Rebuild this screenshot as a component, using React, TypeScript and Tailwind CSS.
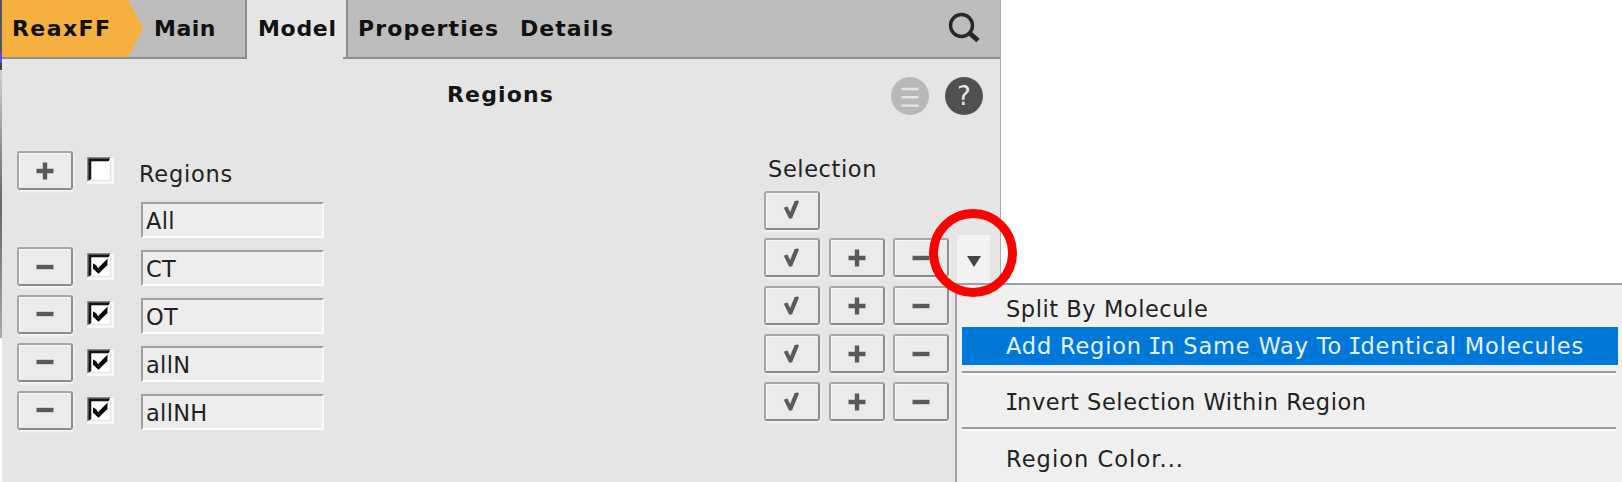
import React from "react";

type Glyph = "plus" | "minus" | "check";

function GlyphIcon({ kind }: { kind: Glyph }) {
  return (
    <svg width="20" height="20" viewBox="0 0 20 20" fill="none" stroke="#5a5a5a">
      {kind === "plus" && <path d="M1.5 10H18.5M10 1.5V18.5" strokeWidth="4.4" />}
      {kind === "minus" && <path d="M1.5 10H18.5" strokeWidth="4.4" />}
      {kind === "check" && (
        <path d="M1.8 7.8L5.4 6.4L8.2 12L12.6 1L16.6 0.6V2.6L10 18.4H7Z" fill="#5a5a5a" stroke="none" />
      )}
    </svg>
  );
}

function ToolButton({ kind }: { kind: Glyph }) {
  return (
    <button className="flex h-[39px] w-[56px] shrink-0 items-center justify-center rounded-[3px] border-2 border-t-[#a6a6a6] border-r-[#8e8e8e] border-b-[#8a8a8a] border-l-[#a6a6a6] bg-[#ebebeb] shadow-[1px_2px_2px_#f4f4f4,inset_1px_1px_1px_#fafafa]">
      <GlyphIcon kind={kind} />
    </button>
  );
}

function CheckBox({ checked }: { checked: boolean }) {
  return (
    <svg width="27" height="27" viewBox="0 0 27 27" className="shrink-0">
      <rect width="27" height="27" fill="#f8f8f8" />
      <path d="M0 0H24L22 2H2V22L0 25Z" fill="#8c8c8c" />
      <path d="M1.5 1.5H23L21.5 4.5H4.5V22L1.5 24Z" fill="#151515" />
      <rect x="4.5" y="4.5" width="18.5" height="18.5" fill="#fff" />
      <path d="M23.5 3V23.5H3" stroke="#e6e6e6" strokeWidth="1.6" fill="none" />
      {checked && <path d="M6 10.5L9 12L11 15.2L20.5 5.5V12L11.5 20.8L6 15.8Z" fill="#080808" />}
    </svg>
  );
}

function Field({ value }: { value: string }) {
  return (
    <div className="flex h-[36px] w-[183px] border-2 border-t-[#a0a0a0] border-r-[#fafafa] border-b-[#fafafa] border-l-[#a0a0a0] bg-[#ededed] pt-[1px] pl-[3px] leading-[32px] tracking-[0.3px] whitespace-nowrap">
      {value}
    </div>
  );
}

// Capital I with serifs, narrowed to sit within proportional text.
function SerifI() {
  return <span className="-mx-[2px] font-['DejaVu_Sans_Mono',monospace]">I</span>;
}

const regions = ["CT", "OT", "allN", "allNH"];

export default function App() {
  return (
    <div className="relative h-[482px] w-[1622px] overflow-hidden bg-white font-['DejaVu_Sans',sans-serif] text-[22.5px] text-[#222]">
      <div className="flex h-full w-[1001px]">
        <div className="flex w-[2px] shrink-0 flex-col">
          <div className="h-[53px] bg-[#55555f]" />
          <div className="h-[10px] bg-[#5650e6]" />
          <div className="h-[7px] bg-[#444]" />
          <div className="h-[268px] bg-linear-to-b from-[#d0d0d0] via-[#666] to-[#aaa]" />
          <div className="grow bg-white" />
        </div>
        <div className="flex grow flex-col border-r border-[#aaa] bg-[#e5e5e5]">
          <nav className="flex h-[59px] shrink-0 text-[22px] leading-[57px] font-bold whitespace-nowrap text-[#111]">
            <div className="relative flex w-[245px] border-r-2 border-b-2 border-[#8e8e8e] bg-[#bdbdbd]">
              <svg width="141" height="57" className="absolute top-0 left-0">
                <path d="M0 0H126L141 28L126 57H0Z" fill="#f6b040" />
              </svg>
              <span className="relative w-[152px] pl-[10px] tracking-[1.4px]">ReaxFF</span>
              <span className="tracking-[0.5px]">Main</span>
            </div>
            <div className="flex w-[96px] pl-[11px] tracking-[0.7px]">Model</div>
            <div className="flex grow border-b-2 border-[#8e8e8e]">
              <div className="w-[5px] border-r-2 border-[#8e8e8e]" />
              <div className="flex grow justify-between bg-[#bdbdbd] pr-[17px]">
                <div className="flex">
                  <span className="w-[163px] pl-[10px] tracking-[1.15px]">Properties</span>
                  <span className="pl-[9px] tracking-[1.05px]">Details</span>
                </div>
                <svg width="36" height="36" viewBox="0 0 36 36" className="mt-[10px]" fill="none" stroke="#282828">
                  <circle cx="14.5" cy="15.5" r="11" strokeWidth="3.4" />
                  <path d="M22.5 23L31 30.5" strokeWidth="5" />
                </svg>
              </div>
            </div>
          </nav>
          <div className="flex h-[92px] shrink-0 items-start justify-between pr-[17px]">
            <h1 className="pt-[19px] pl-[445px] text-[22px] leading-[34px] font-bold tracking-[1.15px] text-[#151515]">Regions</h1>
            <div className="flex gap-[16px] pt-[18px]">
              <svg width="38" height="38" viewBox="0 0 38 38">
                <circle cx="19" cy="19" r="19" fill="#b8b8b8" />
                <path d="M10.5 12H27.5M10.5 20.3H27.5M10.5 28.6H27.5" stroke="#e5e5e5" strokeWidth="2.4" />
              </svg>
              <div className="flex size-[38px] items-center justify-center rounded-full bg-[#505050] text-[26px] text-[#e8e8e8]">
                ?
              </div>
            </div>
          </div>
          <div className="flex justify-between pr-[11px] pl-[15px]">
            <div className="flex flex-col">
              <div className="flex h-[51px]">
                <ToolButton kind="plus" />
                <div className="ml-[14px] pt-[6px]">
                  <CheckBox checked={false} />
                </div>
                <span className="ml-[25px] pt-[6px] leading-[34px] tracking-[0.75px]">Regions</span>
              </div>
              <div className="flex h-[45px] pl-[124px]">
                <Field value="All" />
              </div>
              {regions.map((name) => (
                <div key={name} className="flex h-[47.9px]">
                  <ToolButton kind="minus" />
                  <div className="ml-[14px] pt-[6px]">
                    <CheckBox checked />
                  </div>
                  <div className="ml-[27px] pt-[3px]">
                    <Field value={name} />
                  </div>
                </div>
              ))}
            </div>
            <div className="flex w-[225px] flex-col">
              <span className="h-[39.5px] pl-[4px] leading-[37px] tracking-[0.6px]">Selection</span>
              <div className="flex h-[47.9px]">
                <ToolButton kind="check" />
              </div>
              {regions.map((name, i) => (
                <div key={name} className="flex h-[47.9px] gap-[8.5px]">
                  <ToolButton kind="check" />
                  <ToolButton kind="plus" />
                  <ToolButton kind="minus" />
                  {i === 0 && (
                    <button className="-mt-[3px] ml-[-1px] flex h-[48px] w-[33px] shrink-0 items-center justify-center bg-[#f2f2f2]">
                      <svg width="14" height="11" viewBox="0 0 14 11" className="mt-[4px] ml-[2px]">
                        <path d="M0 0H14L7 11Z" fill="#444" />
                      </svg>
                    </button>
                  )}
                </div>
              ))}
            </div>
          </div>
        </div>
      </div>

      <div className="absolute top-[283px] left-[955px] h-[199px] w-[667px] border-t-2 border-l-2 border-[#a0a0a0] bg-[#efefef] pl-[5px] whitespace-nowrap">
        <div className="h-[42px] pl-[44px] leading-[48px] tracking-[0.55px]">Split By Molecule</div>
        <div className="h-[38px] w-[656px] bg-[#0078d9] pl-[44px] leading-[38px] tracking-[0.82px] text-[#e4f1fc]">
          Add Region <SerifI />n Same Way To <SerifI />dentical Molecules
        </div>
        <div className="mt-[6px] h-[4px] w-[654px] border-t-2 border-b-2 border-t-[#9c9c9c] border-b-[#fafafa]" />
        <div className="h-[52px] pl-[45px] leading-[54px] tracking-[0.56px]">
          <SerifI />nvert Selection Within Region
        </div>
        <div className="h-[4px] w-[654px] border-t-2 border-b-2 border-t-[#9c9c9c] border-b-[#fafafa]" />
        <div className="h-[50px] pl-[44px] leading-[56px] tracking-[1.05px]">Region Color...</div>
      </div>

      <div className="absolute top-[209px] left-[929px] size-[88px] rounded-full border-[9px] border-[#ff0000]" />
    </div>
  );
}
